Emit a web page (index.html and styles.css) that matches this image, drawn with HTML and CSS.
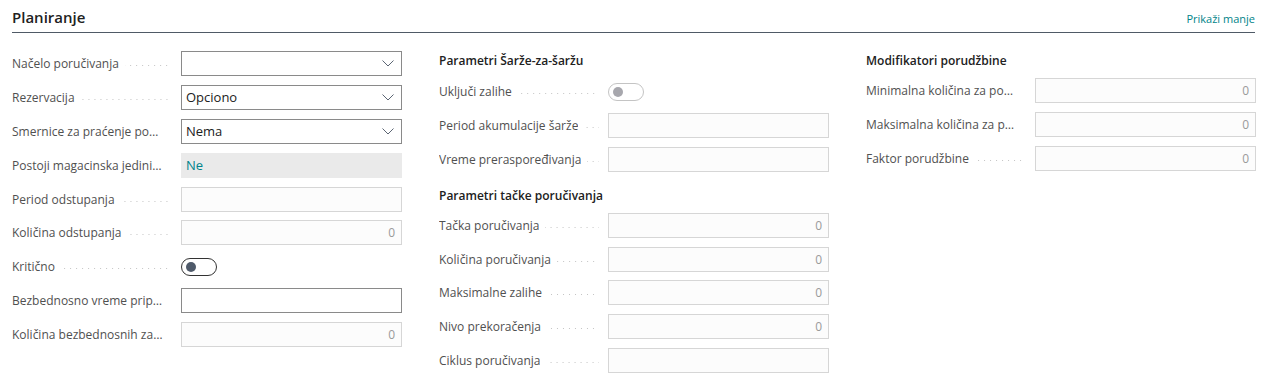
FILE: index.html
```html
<!DOCTYPE html>
<html lang="sr">
<head>
  <meta charset="UTF-8">
  <meta name="viewport" content="width=device-width, initial-scale=1.0">
  <title>Planiranje</title>
  <link rel="stylesheet" href="styles.css">
</head>
<body>
  <section class="fasttab">
    <div class="fasttab-header">
      <h2 class="fasttab-title">Planiranje</h2>
      <a class="show-less" href="#">Prikaži manje</a>
    </div>

    <div class="fasttab-body">
      <!-- Kolona 1 -->
      <div class="column">
        <div class="field">
          <div class="caption"><span class="label">Načelo poručivanja</span><span class="leader"></span></div>
          <div class="control select"><span class="value"></span><svg class="chevron" width="12" height="7" viewBox="0 0 12 7"><polyline points="0.5,0.5 6,6 11.5,0.5" fill="none" stroke="#5b6573" stroke-width="1"/></svg></div>
        </div>
        <div class="field">
          <div class="caption"><span class="label">Rezervacija</span><span class="leader"></span></div>
          <div class="control select"><span class="value">Opciono</span><svg class="chevron" width="12" height="7" viewBox="0 0 12 7"><polyline points="0.5,0.5 6,6 11.5,0.5" fill="none" stroke="#5b6573" stroke-width="1"/></svg></div>
        </div>
        <div class="field">
          <div class="caption"><span class="label">Smernice za praćenje porudžbine</span><span class="leader"></span></div>
          <div class="control select"><span class="value">Nema</span><svg class="chevron" width="12" height="7" viewBox="0 0 12 7"><polyline points="0.5,0.5 6,6 11.5,0.5" fill="none" stroke="#5b6573" stroke-width="1"/></svg></div>
        </div>
        <div class="field">
          <div class="caption"><span class="label">Postoji magacinska jedinica</span><span class="leader"></span></div>
          <div class="control readonly"><span class="value link">Ne</span></div>
        </div>
        <div class="field">
          <div class="caption"><span class="label">Period odstupanja</span><span class="leader"></span></div>
          <div class="control disabled"></div>
        </div>
        <div class="field">
          <div class="caption"><span class="label">Količina odstupanja</span><span class="leader"></span></div>
          <div class="control disabled number">0</div>
        </div>
        <div class="field">
          <div class="caption"><span class="label">Kritično</span><span class="leader"></span></div>
          <div class="toggle"><span class="knob"></span></div>
        </div>
        <div class="field">
          <div class="caption"><span class="label">Bezbednosno vreme pripreme</span><span class="leader"></span></div>
          <div class="control editable"></div>
        </div>
        <div class="field">
          <div class="caption"><span class="label">Količina bezbednosnih zaliha</span><span class="leader"></span></div>
          <div class="control disabled number">0</div>
        </div>
      </div>

      <!-- Kolona 2 -->
      <div class="column">
        <h3 class="group-title">Parametri Šarže-za-šaržu</h3>
        <div class="field toggle-row">
          <div class="caption"><span class="label">Uključi zalihe</span><span class="leader"></span></div>
          <div class="toggle off"><span class="knob"></span></div>
        </div>
        <div class="field">
          <div class="caption"><span class="label">Period akumulacije šarže</span><span class="leader"></span></div>
          <div class="control disabled"></div>
        </div>
        <div class="field">
          <div class="caption"><span class="label">Vreme preraspoređivanja</span><span class="leader"></span></div>
          <div class="control disabled"></div>
        </div>

        <h3 class="group-title second">Parametri tačke poručivanja</h3>
        <div class="field">
          <div class="caption"><span class="label">Tačka poručivanja</span><span class="leader"></span></div>
          <div class="control disabled number">0</div>
        </div>
        <div class="field">
          <div class="caption"><span class="label">Količina poručivanja</span><span class="leader"></span></div>
          <div class="control disabled number">0</div>
        </div>
        <div class="field">
          <div class="caption"><span class="label">Maksimalne zalihe</span><span class="leader"></span></div>
          <div class="control disabled number">0</div>
        </div>
        <div class="field">
          <div class="caption"><span class="label">Nivo prekoračenja</span><span class="leader"></span></div>
          <div class="control disabled number">0</div>
        </div>
        <div class="field">
          <div class="caption"><span class="label">Ciklus poručivanja</span><span class="leader"></span></div>
          <div class="control disabled"></div>
        </div>
      </div>

      <!-- Kolona 3 -->
      <div class="column">
        <h3 class="group-title">Modifikatori porudžbine</h3>
        <div class="field">
          <div class="caption"><span class="label">Minimalna količina za porudžbinu</span><span class="leader"></span></div>
          <div class="control disabled number">0</div>
        </div>
        <div class="field">
          <div class="caption"><span class="label">Maksimalna količina za porudžbinu</span><span class="leader"></span></div>
          <div class="control disabled number">0</div>
        </div>
        <div class="field">
          <div class="caption"><span class="label">Faktor porudžbine</span><span class="leader"></span></div>
          <div class="control disabled number">0</div>
        </div>
      </div>
    </div>
  </section>
</body>
</html>
```

FILE: styles.css
```css
body {
  margin: 0;
  padding: 0;
  background-color: #ffffff;
  font-family: "Open Sans", "Noto Sans", Arial, sans-serif;
  font-size: 12px;
  color: #505050;
}
.fasttab {
  padding: 0 10px 0 12px;
}
.fasttab-header {
  display: flex;
  justify-content: space-between;
  align-items: flex-end;
  height: 32px;
  border-bottom: 1px solid #4f5a66;
}
.fasttab-title {
  margin: 0 0 5px 0;
  font-size: 15px;
  font-weight: 600;
  color: #212121;
}
.show-less {
  margin-bottom: 6px;
  font-size: 11px;
  color: #008489;
  text-decoration: none;
}
.fasttab-body {
  display: grid;
  grid-template-columns: 390px 390px 391px;
  column-gap: 37px;
  padding-top: 18px;
}
.column {
  display: flex;
  flex-direction: column;
}
.group-title {
  margin: 0 0 8px 0;
  height: 19px;
  line-height: 19px;
  font-size: 12px;
  font-weight: 600;
  color: #212121;
}
.group-title.second {
  margin-top: 5px;
}
.field {
  display: flex;
  align-items: center;
  height: 25px;
  margin-bottom: 8.9px;
}
.field.toggle-row {
  height: 27px;
  margin-bottom: 7.9px;
}
.caption {
  display: flex;
  align-items: center;
  width: 160px;
  padding-right: 9px;
  min-width: 0;
}
.label {
  white-space: nowrap;
  overflow: hidden;
  text-overflow: ellipsis;
  min-width: 0;
}
.leader {
  flex: 1 0 3px;
  height: 1px;
  margin-left: 6px;
  margin-top: 4px;
  background-image: linear-gradient(to right, #c4c4c4 1px, transparent 1px);
  background-size: 6px 1px;
  background-position: right top;
  background-repeat: repeat-x;
}
.control {
  position: relative;
  box-sizing: border-box;
  width: 221px;
  height: 25px;
  padding: 0 6px 0 4px;
  display: flex;
  align-items: center;
  color: #212121;
  font-size: 13px;
}
.control.select,
.control.editable {
  border: 1px solid #8a8a8a;
}
.control.disabled {
  border: 1px solid #d6d6d6;
  background-color: #fcfcfc;
}
.control.readonly {
  background-color: #eaeaea;
  padding-left: 5px;
}
.control.number {
  justify-content: flex-end;
  color: #9a9a9a;
  font-size: 12px;
}
.value {
  flex: 1;
}
.value.link {
  color: #00838a;
}
.chevron {
  margin-right: 1px;
}
.toggle {
  box-sizing: border-box;
  width: 36px;
  height: 18px;
  border: 1px solid #333333;
  border-radius: 9px;
  display: flex;
  align-items: center;
  padding-left: 4px;
}
.knob {
  width: 10px;
  height: 10px;
  border-radius: 50%;
  background-color: #4f5a6a;
}
.toggle.off {
  border-color: #c4c4c4;
}
.toggle.off .knob {
  background-color: #a7a7ad;
}
```
